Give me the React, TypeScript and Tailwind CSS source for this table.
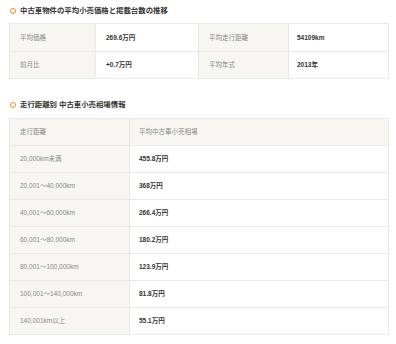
const summary = [
  ["平均価格", "269.6万円", "平均走行距離", "54109km"],
  ["前月比", "+0.7万円", "平均年式", "2013年"],
];

const prices = [
  ["20,000km未満", "455.8万円"],
  ["20,001〜40,000km", "368万円"],
  ["40,001〜60,000km", "266.4万円"],
  ["60,001〜80,000km", "180.2万円"],
  ["80,001〜100,000km", "123.9万円"],
  ["100,001〜140,000km", "81.8万円"],
  ["140,001km以上", "55.1万円"],
];

function Heading({ children }: { children: React.ReactNode }) {
  return (
    <h2 className="flex items-center gap-[4px] h-[12px] pl-[1px] text-[7.4px] font-bold text-[#333]">
      <span className="w-[6px] h-[6px] rounded-full border-[1.5px] border-[#f08c1e] bg-white" />
      {children}
    </h2>
  );
}

export default function App() {
  return (
    <div
      className="w-[396px] h-[344px] bg-white px-[9px] pt-[5px]"
      style={{ fontFamily: '"Liberation Sans", "Noto Sans CJK JP", sans-serif' }}
    >
      <Heading>中古車物件の平均小売価格と掲載台数の推移</Heading>
      <div className="mt-[6px] w-[380px] border border-[#ebe9e5]">
        {summary.map((r, i) => (
          <div
            key={i}
            className={`grid grid-cols-[86px_103px_90px_1fr] h-[27px] text-[6.5px] ${i > 0 ? "border-t border-[#ebe9e5]" : ""}`}
          >
            <div className="flex items-center pl-[10px] bg-[#f7f6f3] text-[#888] border-r border-[#ebe9e5]">{r[0]}</div>
            <div className="flex items-center pl-[10px] font-bold text-[#333] border-r border-[#ebe9e5]">{r[1]}</div>
            <div className="flex items-center pl-[10px] bg-[#f7f6f3] text-[#888] border-r border-[#ebe9e5]">{r[2]}</div>
            <div className="flex items-center pl-[8px] font-bold text-[#333]">{r[3]}</div>
          </div>
        ))}
      </div>

      <div className="mt-[20px]">
        <Heading>走行距離別 中古車小売相場情報</Heading>
      </div>
      <div className="mt-[7px] w-[380px] border border-[#ebe9e5]">
        <div className="grid grid-cols-[120px_1fr] h-[26px] text-[6.5px] bg-[#f7f6f3] text-[#888]">
          <div className="flex items-center pl-[10px] border-r border-[#ebe9e5]">走行距離</div>
          <div className="flex items-center pl-[9px]">平均中古車小売相場</div>
        </div>
        {prices.map((r, i) => (
          <div key={i} className="grid grid-cols-[120px_1fr] h-[27px] text-[6.5px] border-t border-[#ebe9e5]">
            <div className="flex items-center pl-[10px] bg-[#f7f6f3] text-[#888] border-r border-[#ebe9e5]">{r[0]}</div>
            <div className="flex items-center pl-[9px] font-bold text-[#333]">{r[1]}</div>
          </div>
        ))}
      </div>
    </div>
  );
}
